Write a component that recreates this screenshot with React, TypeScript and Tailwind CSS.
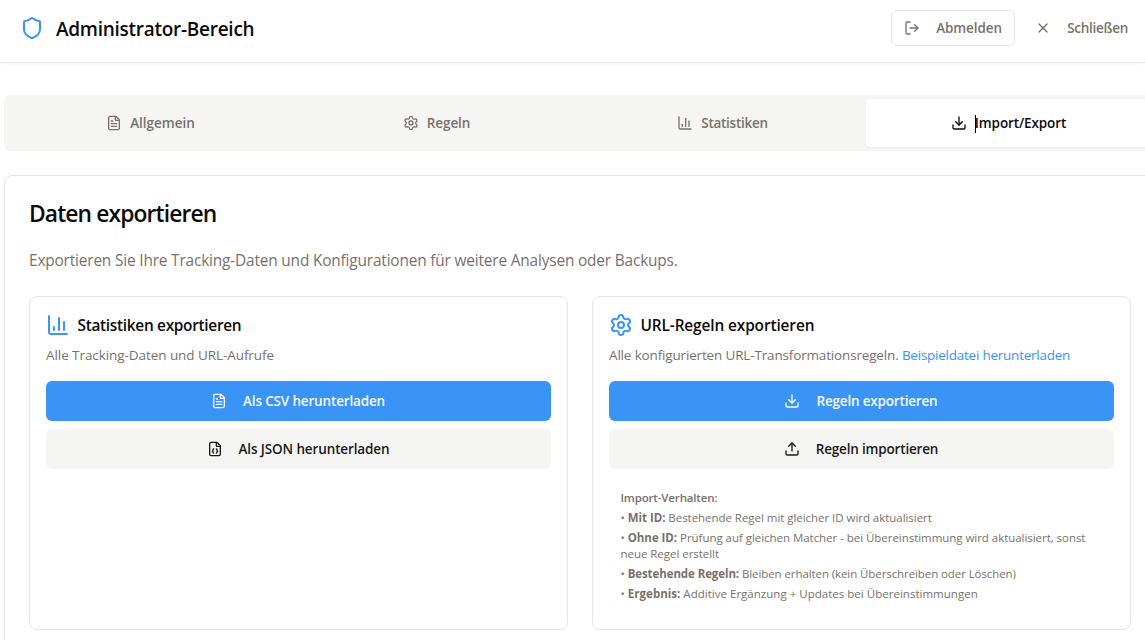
import type { ReactNode } from "react";
import {
  ChartColumn,
  Download,
  FileJson,
  FileText,
  LogOut,
  Settings,
  Shield,
  Upload,
  X,
} from "lucide-react";

function Tab({ icon, children, active = false }: { icon: ReactNode; children: ReactNode; active?: boolean }) {
  return (
    <button
      className={
        active
          ? "flex h-12 items-center justify-center gap-2 rounded-sm bg-white pr-px text-[13.5px] font-semibold text-stone-950 shadow-xs"
          : "flex h-12 items-center justify-center gap-2 rounded-sm pr-px text-[13.5px] font-semibold text-stone-500"
      }
    >
      {icon}
      {children}
    </button>
  );
}

function ActionButton({ icon, children, primary = false }: { icon: ReactNode; children: ReactNode; primary?: boolean }) {
  return (
    <button
      className={
        primary
          ? "flex h-10 w-full items-center justify-center gap-4 rounded-md bg-[#3994f5] pr-px text-[13.5px] font-semibold text-stone-50"
          : "flex h-10 w-full items-center justify-center gap-4 rounded-md bg-[#f5f5f4] pr-px text-[13.5px] font-semibold text-stone-900"
      }
    >
      {icon}
      {children}
    </button>
  );
}

export default function App() {
  return (
    <div className="h-[640px] w-full overflow-hidden bg-white font-['Open_Sans','Noto_Sans',sans-serif] text-stone-950">
      <header className="flex h-[63px] items-start justify-between border-b border-[#e5e5e5] pr-[17px] pl-5 shadow-xs">
        <div className="flex h-14 items-center gap-3">
          <Shield className="size-6 text-[#3994f5]" />
          <h1 className="pt-0.5 text-[19px] font-semibold tracking-[-0.27px]">Administrator-Bereich</h1>
        </div>
        <div className="flex h-14 items-center text-[13.5px] font-semibold text-stone-500">
          <button className="flex h-9 w-[124px] items-center rounded-md border border-[#e5e5e5] pl-3">
            <LogOut className="size-4" />
            <span className="ml-4 tracking-[-0.1px]">Abmelden</span>
          </button>
          <button className="ml-5 flex h-9 items-center">
            <X className="size-4" />
            <span className="ml-4 tracking-[-0.28px]">Schließen</span>
          </button>
        </div>
      </header>

      <main className="ml-1 w-[1152px] pt-8">
        <nav className="grid h-14 grid-cols-4 rounded-md bg-[#f5f5f4] p-1">
          <Tab icon={<FileText className="size-4" />}>
            <span>Allgemein</span>
          </Tab>
          <Tab icon={<Settings className="size-4" />}>
            <span className="tracking-[-0.1px]">Regeln</span>
          </Tab>
          <Tab icon={<ChartColumn className="size-4" />}>
            <span className="tracking-[-0.28px]">Statistiken</span>
          </Tab>
          <Tab active icon={<Download className="size-4" />}>
            <span className="relative tracking-[-0.12px]">
              <span className="absolute top-0.5 left-0 h-[18px] w-px bg-black" />
              Import/Export
            </span>
          </Tab>
        </nav>

        <section className="mt-6 h-[520px] rounded-lg border border-[#e5e5e5] px-6 pt-6">
          <h2 className="text-[22.8px] leading-7 font-semibold tracking-[-0.87px]">Daten exportieren</h2>
          <p className="mt-[21px] text-[15.4px] leading-6 tracking-[-0.165px] text-stone-500">
            Exportieren Sie Ihre Tracking-Daten und Konfigurationen für weitere Analysen oder Backups.
          </p>

          <div className="mt-[23px] grid h-[334px] grid-cols-2 gap-6">
            <article className="rounded-lg border border-[#e5e5e5] p-4">
              <div className="flex h-6 items-center gap-[7.5px]">
                <ChartColumn className="size-6 text-[#3994f5]" />
                <h3 className="pt-0.5 text-[15.4px] font-semibold tracking-[-0.3px]">Statistiken exportieren</h3>
              </div>
              <p className="mt-2 text-[13.5px] leading-5 tracking-[-0.07px] text-stone-500">
                Alle Tracking-Daten und URL-Aufrufe
              </p>
              <div className="mt-4 flex flex-col gap-2">
                <ActionButton primary icon={<FileText className="size-4" />}>
                  <span className="tracking-[-0.16px]">Als CSV herunterladen</span>
                </ActionButton>
                <ActionButton icon={<FileJson className="size-4" />}>
                  <span className="tracking-[-0.12px]">Als JSON herunterladen</span>
                </ActionButton>
              </div>
            </article>

            <article className="rounded-lg border border-[#e5e5e5] p-4">
              <div className="flex h-6 items-center gap-[7.5px]">
                <Settings className="size-6 text-[#3994f5]" />
                <h3 className="pt-0.5 text-[15.4px] font-semibold tracking-[-0.11px]">URL-Regeln exportieren</h3>
              </div>
              <p className="mt-2 text-[13.5px] leading-5 text-stone-500">
                <span className="tracking-[-0.16px]">Alle konfigurierten URL-Transformationsregeln. </span>
                <a className="tracking-[-0.24px] text-[#3994f5]">Beispieldatei herunterladen</a>
              </p>
              <div className="mt-4 flex flex-col gap-2">
                <ActionButton primary icon={<Download className="size-4" />}>
                  <span className="tracking-[-0.18px]">Regeln exportieren</span>
                </ActionButton>
                <ActionButton icon={<Upload className="size-4" />}>
                  <span className="tracking-[-0.18px]">Regeln importieren</span>
                </ActionButton>
              </div>
              <div className="mt-[9px] flex flex-col gap-1 px-[11.5px] pt-3 text-[11.5px] leading-4 tracking-[-0.04px] text-stone-500">
                <p className="font-semibold tracking-[-0.15px]">Import-Verhalten:</p>
                <p>
                  • <strong>Mit ID:</strong> Bestehende Regel mit gleicher ID wird aktualisiert
                </p>
                <p>
                  • <strong>Ohne ID:</strong> Prüfung auf gleichen Matcher - bei Übereinstimmung wird aktualisiert, sonst
                  neue Regel erstellt
                </p>
                <p className="tracking-[-0.09px]">
                  • <strong>Bestehende Regeln:</strong> Bleiben erhalten (kein Überschreiben oder Löschen)
                </p>
                <p className="tracking-[0.02px]">
                  • <strong>Ergebnis:</strong> Additive Ergänzung + Updates bei Übereinstimmungen
                </p>
              </div>
            </article>
          </div>
        </section>
      </main>
    </div>
  );
}
